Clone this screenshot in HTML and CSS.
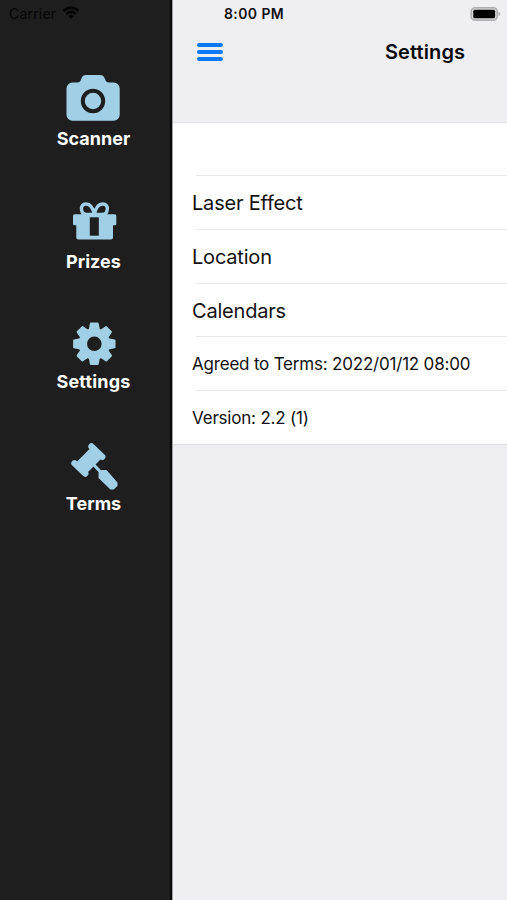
FILE: index.html
```
<!doctype html>
<html lang="en">
    <head>
        <meta charset="utf-8">
        <title>Settings</title>
        <link rel="stylesheet" href="styles.css">
    </head>
    <body>
        <div class="sidebar">
            <div class="carrier">
                <span class="carrier-name">Carrier</span>
                <svg class="wifi" width="18" height="14" viewBox="0 0 18 14">
                    <path d="M1.5 5Q9-1.8 16.5 5M4.3 8Q9 3.8 13.7 8" fill="none" stroke="#050505" stroke-width="2.5"/>
                    <path d="M6.2 10Q9 7.6 11.8 10L9 13Z" fill="#050505"/>
                </svg>
            </div>
            <a class="item scanner">
                <svg class="icon" viewBox="0 0 55 48">
                    <path d="M6.5 7.5H11c2.500 0 3.200-.8 4-3C16 1.300 17.500 0 20.300 0h13.600c2.800 0 4.300 1.300 5.300 4.500.8 2.200 1.500 3 4 3h4.500a6 6 0 0 1 6 6v26.200a6 6 0 0 1-6 6H6.500a6 6 0 0 1-6-6V13.500a6 6 0 0 1 6-6z"/>
                    <circle class="hole-ring" cx="27" cy="26" r="10.200"/>
                </svg>
                <span class="label">Scanner</span>
            </a>
            <a class="item prizes">
                <svg class="icon" viewBox="0 0 55 48">
                    <path class="bow" d="M28.300 16.500C27 10 24 6 20 6c-3.300 0-5 2.500-4.500 5.500.4 3.200 2.500 5 5 5h15.800c2.500 0 4.600-1.800 5-5C41.800 8.500 40.100 6 36.800 6c-4 0-7.200 4-8.500 10.500"/>
                    <rect x="7" y="16.300" width="43.300" height="11" rx="1.500"/>
                    <rect x="10.300" y="24" width="36.700" height="17.400" rx="2"/>
                    <rect class="hole" x="23.800" y="19.300" width="9" height="18.400"/>
                </svg>
                <span class="label">Prizes</span>
            </a>
            <a class="item settings">
                <svg class="icon" viewBox="0 0 55 48">
                    <g transform="translate(28.300 25.800)">
                        <circle r="15.800"/>
                        <path id="teeth" class="teeth" d="M-3.400-20.200H3.400L4.600-14V14L3.400 20.200H-3.400L-4.600 14V-14Z"/>
                        <use href="#teeth" transform="rotate(45)"/>
                        <use href="#teeth" transform="rotate(90)"/>
                        <use href="#teeth" transform="rotate(135)"/>
                        <circle class="hole" r="7.300"/>
                    </g>
                </svg>
                <span class="label">Settings</span>
            </a>
            <a class="item terms">
                <svg class="icon" viewBox="0 0 55 48">
                    <path d="M26 6.500L37 17L19.500 34.500L8.600 23.900Z"/>
                    <path class="caps" d="M25.500 6.500L36.200 16.700M8.500 23.300L19.200 33.500"/>
                    <path class="handle" d="M27 24L36 33.500"/>
                    <path class="grip" d="M34 32.300L36.500 31H40L50.500 42.800V45.500L47.300 48.500H44.800L33.500 37.500V33Z"/>
                </svg>
                <span class="label">Terms</span>
            </a>
        </div>
        <div class="main">
            <div class="status">
                <span class="time">8:00 PM</span>
                <svg class="battery" width="31" height="16" viewBox="0 0 31 16">
                    <rect x="1.200" y="1.700" width="26" height="12.600" rx="3.800" fill="#d8d8da" stroke="#aeaeb0" stroke-width="1.500"/>
                    <rect x="3.300" y="3.800" width="21.800" height="8.500" rx="1.500" fill="#000"/>
                    <path d="M28.500 5.800c2.200.8 2.200 3.600 0 4.400z" fill="#aeaeb0"/>
                </svg>
            </div>
            <div class="navbar">
                <div class="menu">
                    <div class="bar"></div>
                    <div class="bar"></div>
                    <div class="bar"></div>
                </div>
                <h1>Settings</h1>
            </div>
            <ul class="list">
                <li class="empty"></li>
                <li>Laser Effect</li>
                <li>Location</li>
                <li class="calendars">Calendars</li>
                <li class="small">Agreed to Terms: 2022/01/12 08:00</li>
                <li class="small">Version: 2.2 (1)</li>
            </ul>
        </div>
    </body>
</html>
```
FILE: styles.css
```
* {
    box-sizing: border-box;
}
body {
    margin: 0;
    height: 900px;
    display: flex;
    overflow: hidden;
    background: #efeef3;
    color: #111;
    font-family: Inter, "Liberation Sans", sans-serif;
}

.sidebar {
    width: 172px;
    flex: none;
    background: #1e1e1e;
    border-right: 2px solid #080808;
}
.carrier {
    display: flex;
    align-items: center;
    height: 27px;
    padding-left: 9px;
    margin-bottom: 48px;
    color: #060606;
    font-size: 14px;
}
.carrier-name {
    width: 53px;
    letter-spacing: 0.2px;
}
.wifi {
    margin-top: -2px;
}
.item {
    display: flex;
    flex-direction: column;
    align-items: center;
    gap: 4px;
    width: 157px;
    height: 123px;
    margin-left: 15px;
}
.settings {
    height: 122px;
}
.prizes {
    height: 120px;
}
.icon {
    width: 55px;
    height: 48px;
    fill: #a0cfe6;
    overflow: visible;
}
.icon .hole {
    fill: #1e1e1e;
}
.hole-ring {
    fill: none;
    stroke: #1e1e1e;
    stroke-width: 4px;
}
.bow {
    fill: none;
    stroke: #a0cfe6;
    stroke-width: 3.4px;
}
.teeth, .grip {
    stroke: #a0cfe6;
    stroke-width: 2px;
    stroke-linejoin: round;
}
.caps {
    stroke: #a0cfe6;
    stroke-width: 6.4px;
    stroke-linecap: round;
}
.handle {
    stroke: #a0cfe6;
    stroke-width: 3.2px;
}
.label {
    color: #fff;
    font-size: 18px;
    font-weight: 700;
    line-height: 24px;
}
.settings .label {
    letter-spacing: 0.2px;
}

.main {
    flex: 1;
    border-left: 1px solid #a5a5a7;
}
.status {
    display: flex;
    align-items: center;
    justify-content: space-between;
    height: 27px;
    padding: 0 6px 0 51px;
}
.time {
    font-size: 14px;
    font-weight: 600;
    letter-spacing: 0.4px;
}
.navbar {
    display: flex;
    align-items: center;
    height: 50px;
    padding-left: 24px;
}
.menu {
    display: flex;
    flex-direction: column;
    gap: 3.4px;
    width: 26px;
}
.bar {
    height: 4px;
    border-radius: 2px;
    background: #0b79f7;
}
h1 {
    margin: 0 0 0 162px;
    font-size: 20px;
    font-weight: 600;
    letter-spacing: 0.1px;
    color: #080808;
}
.list {
    list-style-type: none;
    margin: 45px 0 0;
    padding: 0;
    background: #fff;
    border-top: 1px solid #e2e2e5;
    border-bottom: 1px solid #e0e0e2;
}
li {
    display: flex;
    align-items: center;
    height: 54px;
    padding-left: 19px;
    font-size: 20px;
    letter-spacing: -0.2px;
    /* separator starts a little right of the text */
    background: linear-gradient(#e9e9eb, #e9e9eb) 23px 100% / 100% 1px no-repeat;
}
.empty, .calendars {
    height: 53px;
}
.small {
    font-size: 17px;
}
li:last-child {
    height: 53px;
    background: none;
}
```
